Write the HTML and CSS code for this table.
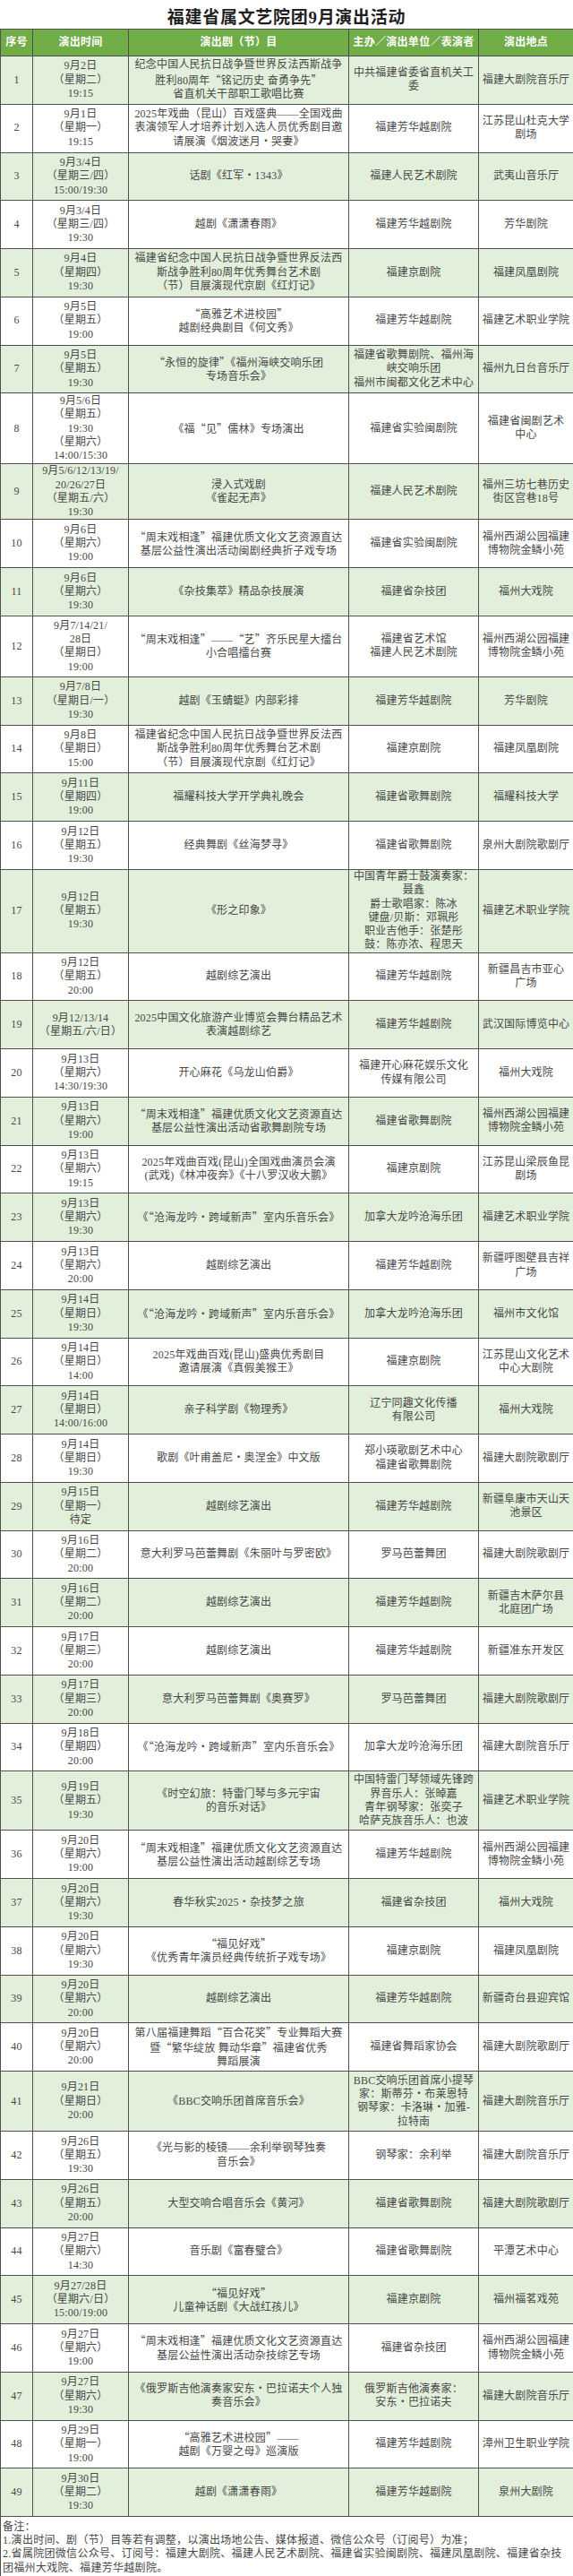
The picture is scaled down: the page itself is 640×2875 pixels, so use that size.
FILE: index.html
```html
<!DOCTYPE html>
<html lang="zh-CN">
<head>
<meta charset="utf-8">
<title>福建省属文艺院团9月演出活动</title>
<link rel="stylesheet" href="styles.css">
</head>
<body>
<div class="title">福建省属文艺院团9月演出活动</div>
<table class="schedule">
<colgroup>
<col class="c-no"><col class="c-time"><col class="c-prog"><col class="c-org"><col class="c-venue">
</colgroup>
<thead>
<tr><th>序号</th><th>演出时间</th><th>演出剧（节）目</th><th>主办／演出单位／表演者</th><th>演出地点</th></tr>
</thead>
<tbody>
<tr><td>1</td><td>9月2日<br>（星期二）<br>19:15</td><td>纪念中国人民抗日战争暨世界反法西斯战争<br>胜利80周年<span class="q">“</span>铭记历史 奋勇争先<span class="q">”</span><br>省直机关干部职工歌唱比赛</td><td>中共福建省委省直机关工<br>委</td><td>福建大剧院音乐厅</td></tr>
<tr><td>2</td><td>9月1日<br>（星期一）<br>19:15</td><td>2025年戏曲（昆山）百戏盛典——全国戏曲<br>表演领军人才培养计划入选人员优秀剧目邀<br>请展演《烟波迷月・哭妻》</td><td>福建芳华越剧院</td><td>江苏昆山杜克大学<br>剧场</td></tr>
<tr><td>3</td><td>9月3/4日<br>（星期三/四）<br>15:00/19:30</td><td>话剧《红军・1343》</td><td>福建人民艺术剧院</td><td>武夷山音乐厅</td></tr>
<tr><td>4</td><td>9月3/4日<br>（星期三/四）<br>19:30</td><td>越剧《潇潇春雨》</td><td>福建芳华越剧院</td><td>芳华剧院</td></tr>
<tr><td>5</td><td>9月4日<br>（星期四）<br>19:30</td><td>福建省纪念中国人民抗日战争暨世界反法西<br>斯战争胜利80周年优秀舞台艺术剧<br>（节）目展演现代京剧《红灯记》</td><td>福建京剧院</td><td>福建凤凰剧院</td></tr>
<tr><td>6</td><td>9月5日<br>（星期五）<br>19:00</td><td><span class="q">“</span>高雅艺术进校园<span class="q">”</span><br>越剧经典剧目《何文秀》</td><td>福建芳华越剧院</td><td>福建艺术职业学院</td></tr>
<tr><td>7</td><td>9月5日<br>（星期五）<br>19:30</td><td><span class="q">“</span>永恒的旋律<span class="q">”</span>《福州海峡交响乐团<br>专场音乐会》</td><td>福建省歌舞剧院、福州海<br>峡交响乐团<br>福州市闽都文化艺术中心</td><td>福州九日台音乐厅</td></tr>
<tr class="h79"><td>8</td><td>9月5/6日<br>（星期五）<br>19:30<br>（星期六）<br>14:00/15:30</td><td>《福<span class="q">“</span>见<span class="q">”</span>儒林》专场演出</td><td>福建省实验闽剧院</td><td>福建省闽剧艺术<br>中心</td></tr>
<tr class="h61"><td>9</td><td>9月5/6/12/13/19/<br>20/26/27日<br>（星期五/六）<br>19:30</td><td>浸入式戏剧<br>《雀起无声》</td><td>福建人民艺术剧院</td><td>福州三坊七巷历史<br>街区宫巷18号</td></tr>
<tr><td>10</td><td>9月6日<br>（星期六）<br>19:00</td><td><span class="q">“</span>周末戏相逢<span class="q">”</span>福建优质文化文艺资源直达<br>基层公益性演出活动闽剧经典折子戏专场</td><td>福建省实验闽剧院</td><td>福州西湖公园福建<br>博物院金鳞小苑</td></tr>
<tr><td>11</td><td>9月6日<br>（星期六）<br>19:30</td><td>《杂技集萃》精品杂技展演</td><td>福建省杂技团</td><td>福州大戏院</td></tr>
<tr class="h68"><td>12</td><td>9月7/14/21/<br>28日<br>（星期日）<br>19:00</td><td><span class="q">“</span>周末戏相逢<span class="q">”</span>——<span class="q">“</span>艺<span class="q">”</span>齐乐民星大擂台<br>小合唱擂台赛</td><td>福建省艺术馆<br>福建人民艺术剧院</td><td>福州西湖公园福建<br>博物院金鳞小苑</td></tr>
<tr><td>13</td><td>9月7/8日<br>（星期日/一）<br>19:30</td><td>越剧《玉蜻蜓》内部彩排</td><td>福建芳华越剧院</td><td>芳华剧院</td></tr>
<tr><td>14</td><td>9月8日<br>（星期日）<br>15:00</td><td>福建省纪念中国人民抗日战争暨世界反法西<br>斯战争胜利80周年优秀舞台艺术剧<br>（节）目展演现代京剧《红灯记》</td><td>福建京剧院</td><td>福建凤凰剧院</td></tr>
<tr><td>15</td><td>9月11日<br>（星期四）<br>19:00</td><td>福耀科技大学开学典礼晚会</td><td>福建省歌舞剧院</td><td>福耀科技大学</td></tr>
<tr><td>16</td><td>9月12日<br>（星期五）<br>19:30</td><td>经典舞剧《丝海梦寻》</td><td>福建省歌舞剧院</td><td>泉州大剧院歌剧厅</td></tr>
<tr class="h92"><td>17</td><td>9月12日<br>（星期五）<br>19:30</td><td>《形之印象》</td><td>中国青年爵士鼓演奏家：<br>聂鑫<br>爵士歌唱家：陈冰<br>键盘/贝斯：邓珮彤<br>职业吉他手：张楚彤<br>鼓：陈亦浓、程思天</td><td>福建艺术职业学院</td></tr>
<tr><td>18</td><td>9月12日<br>（星期五）<br>20:00</td><td>越剧综艺演出</td><td>福建芳华越剧院</td><td>新疆昌吉市亚心<br>广场</td></tr>
<tr><td>19</td><td>9月12/13/14<br>（星期五/六/日）</td><td>2025中国文化旅游产业博览会舞台精品艺术<br>表演越剧综艺</td><td>福建芳华越剧院</td><td>武汉国际博览中心</td></tr>
<tr><td>20</td><td>9月13日<br>（星期六）<br>14:30/19:30</td><td>开心麻花《乌龙山伯爵》</td><td>福建开心麻花娱乐文化<br>传媒有限公司</td><td>福州大戏院</td></tr>
<tr><td>21</td><td>9月13日<br>（星期六）<br>19:00</td><td><span class="q">“</span>周末戏相逢<span class="q">”</span>福建优质文化文艺资源直达<br>基层公益性演出活动省歌舞剧院专场</td><td>福建省歌舞剧院</td><td>福州西湖公园福建<br>博物院金鳞小苑</td></tr>
<tr><td>22</td><td>9月13日<br>（星期六）<br>19:15</td><td>2025年戏曲百戏(昆山)全国戏曲演员会演<br>(武戏)《林冲夜奔》《十八罗汉收大鹏》</td><td>福建京剧院</td><td>江苏昆山梁辰鱼昆<br>剧场</td></tr>
<tr><td>23</td><td>9月13日<br>（星期六）<br>19:30</td><td>《<span class="q">“</span>沧海龙吟・跨域新声<span class="q">”</span>室内乐音乐会》</td><td>加拿大龙吟沧海乐团</td><td>福建艺术职业学院</td></tr>
<tr><td>24</td><td>9月13日<br>（星期六）<br>20:00</td><td>越剧综艺演出</td><td>福建芳华越剧院</td><td>新疆呼图壁县吉祥<br>广场</td></tr>
<tr><td>25</td><td>9月14日<br>（星期日）<br>19:30</td><td>《<span class="q">“</span>沧海龙吟・跨域新声<span class="q">”</span>室内乐音乐会》</td><td>加拿大龙吟沧海乐团</td><td>福州市文化馆</td></tr>
<tr><td>26</td><td>9月14日<br>（星期日）<br>14:00</td><td>2025年戏曲百戏(昆山)盛典优秀剧目<br>邀请展演《真假美猴王》</td><td>福建京剧院</td><td>江苏昆山文化艺术<br>中心大剧院</td></tr>
<tr><td>27</td><td>9月14日<br>（星期日）<br>14:00/16:00</td><td>亲子科学剧《物理秀》</td><td>辽宁同趣文化传播<br>有限公司</td><td>福州大戏院</td></tr>
<tr><td>28</td><td>9月14日<br>（星期日）<br>19:30</td><td>歌剧《叶甫盖尼・奥涅金》中文版</td><td>郑小瑛歌剧艺术中心<br>福建省歌舞剧院</td><td>福建大剧院歌剧厅</td></tr>
<tr><td>29</td><td>9月15日<br>（星期一）<br>待定</td><td>越剧综艺演出</td><td>福建芳华越剧院</td><td>新疆阜康市天山天<br>池景区</td></tr>
<tr><td>30</td><td>9月16日<br>（星期二）<br>20:00</td><td>意大利罗马芭蕾舞剧《朱丽叶与罗密欧》</td><td>罗马芭蕾舞团</td><td>福建大剧院歌剧厅</td></tr>
<tr><td>31</td><td>9月16日<br>（星期二）<br>20:00</td><td>越剧综艺演出</td><td>福建芳华越剧院</td><td>新疆吉木萨尔县<br>北庭团广场</td></tr>
<tr><td>32</td><td>9月17日<br>（星期三）<br>20:00</td><td>越剧综艺演出</td><td>福建芳华越剧院</td><td>新疆准东开发区</td></tr>
<tr><td>33</td><td>9月17日<br>（星期三）<br>20:00</td><td>意大利罗马芭蕾舞剧《奥赛罗》</td><td>罗马芭蕾舞团</td><td>福建大剧院歌剧厅</td></tr>
<tr><td>34</td><td>9月18日<br>（星期四）<br>20:00</td><td>《<span class="q">“</span>沧海龙吟・跨域新声<span class="q">”</span>室内乐音乐会》</td><td>加拿大龙吟沧海乐团</td><td>福建大剧院音乐厅</td></tr>
<tr class="h66"><td>35</td><td>9月19日<br>（星期五）<br>19:30</td><td>《时空幻旅：特雷门琴与多元宇宙<br>的音乐对话》</td><td>中国特雷门琴领域先锋跨<br>界音乐人：张晫嘉<br>青年钢琴家：张奕子<br>哈萨克族音乐人：也波</td><td>福建艺术职业学院</td></tr>
<tr><td>36</td><td>9月20日<br>（星期六）<br>19:00</td><td><span class="q">“</span>周末戏相逢<span class="q">”</span>福建优质文化文艺资源直达<br>基层公益性演出活动越剧综艺专场</td><td>福建芳华越剧院</td><td>福州西湖公园福建<br>博物院金鳞小苑</td></tr>
<tr><td>37</td><td>9月20日<br>（星期六）<br>19:30</td><td>春华秋实2025・杂技梦之旅</td><td>福建省杂技团</td><td>福州大戏院</td></tr>
<tr><td>38</td><td>9月20日<br>（星期六）<br>19:30</td><td><span class="q">“</span>福见好戏<span class="q">”</span><br>《优秀青年演员经典传统折子戏专场》</td><td>福建京剧院</td><td>福建凤凰剧院</td></tr>
<tr><td>39</td><td>9月20日<br>（星期六）<br>20:00</td><td>越剧综艺演出</td><td>福建芳华越剧院</td><td>新疆奇台县迎宾馆</td></tr>
<tr><td>40</td><td>9月20日<br>（星期六）<br>20:00</td><td>第八届福建舞蹈<span class="q">“</span>百合花奖<span class="q">”</span>专业舞蹈大赛<br>暨<span class="q">“</span>繁华绽放 舞动华章<span class="q">”</span>福建省优秀<br>舞蹈展演</td><td>福建省舞蹈家协会</td><td>福建大剧院歌剧厅</td></tr>
<tr class="h67"><td>41</td><td>9月21日<br>（星期日）<br>20:00</td><td>《BBC交响乐团首席音乐会》</td><td>BBC交响乐团首席小提琴<br>家：斯蒂芬・布莱恩特<br>钢琴家：卡洛琳・加雅-<br>拉特南</td><td>福建大剧院音乐厅</td></tr>
<tr><td>42</td><td>9月26日<br>（星期五）<br>19:30</td><td>《光与影的棱镜——余利举钢琴独奏<br>音乐会》</td><td>钢琴家：余利举</td><td>福建大剧院音乐厅</td></tr>
<tr><td>43</td><td>9月26日<br>（星期五）<br>20:00</td><td>大型交响合唱音乐会《黄河》</td><td>福建省歌舞剧院</td><td>福建大剧院歌剧厅</td></tr>
<tr><td>44</td><td>9月27日<br>（星期六）<br>14:30</td><td>音乐剧《富春璧合》</td><td>福建省歌舞剧院</td><td>平潭艺术中心</td></tr>
<tr><td>45</td><td>9月27/28日<br>（星期六/日）<br>15:00/19:00</td><td><span class="q">“</span>福见好戏<span class="q">”</span><br>儿童神话剧《大战红孩儿》</td><td>福建京剧院</td><td>福州福茗戏苑</td></tr>
<tr><td>46</td><td>9月27日<br>（星期六）<br>19:00</td><td><span class="q">“</span>周末戏相逢<span class="q">”</span>福建优质文化文艺资源直达<br>基层公益性演出活动杂技综艺专场</td><td>福建省杂技团</td><td>福州西湖公园福建<br>博物院金鳞小苑</td></tr>
<tr><td>47</td><td>9月27日<br>（星期六）<br>19:30</td><td>《俄罗斯吉他演奏家安东・巴拉诺夫个人独<br>奏音乐会》</td><td>俄罗斯吉他演奏家：<br>安东・巴拉诺夫</td><td>福建大剧院音乐厅</td></tr>
<tr><td>48</td><td>9月29日<br>（星期一）<br>19:00</td><td><span class="q">“</span>高雅艺术进校园<span class="q">”</span>——<br>越剧《万婴之母》巡演版</td><td>福建芳华越剧院</td><td>漳州卫生职业学院</td></tr>
<tr><td>49</td><td>9月30日<br>（星期二）<br>19:30</td><td>越剧《潇潇春雨》</td><td>福建芳华越剧院</td><td>泉州大剧院</td></tr>
<tr class="notes"><td colspan="5">备注：<br>1.演出时间、剧（节）目等若有调整，以演出场地公告、媒体报道、微信公众号（订阅号）为准；<br>2.省属院团微信公众号、订阅号：福建大剧院、福建人民艺术剧院、福建省实验闽剧院、福建凤凰剧院、福建省杂技<br>团福州大戏院、福建芳华越剧院。</td></tr>
</tbody>
</table>
</body>
</html>
```

FILE: styles.css
```css
html, body {
  margin: 0;
  padding: 0;
  background: #ffffff;
}

body {
  width: 640px;
  font-family: "Liberation Serif", "Noto Sans CJK SC", serif;
  color: #484848;
}

.title {
  height: 32px;
  display: flex;
  align-items: center;
  justify-content: center;
  padding-top: 2px;
  box-sizing: border-box;
  font-size: 19px;
  font-weight: 700;
  letter-spacing: 0.7px;
  color: #1f1f1f;
}

.schedule {
  width: 640px;
  border-collapse: collapse;
  table-layout: fixed;
  font-size: 12px;
  line-height: 15.3px;
  letter-spacing: 0.2px;
}

.c-no { width: 36px; }
.c-time { width: 107px; }
.c-prog { width: 246px; }
.c-org { width: 145px; }
.c-venue { width: 106px; }

.schedule th,
.schedule td {
  border: 1px solid #505050;
  padding: 0 1px;
  text-align: center;
  vertical-align: middle;
  white-space: nowrap;
  overflow: hidden;
}

.schedule thead tr {
  height: 30px;
  background: #70ad47;
}

.schedule th {
  color: #ffffff;
  font-weight: 700;
  font-size: 12px;
  letter-spacing: 0.3px;
}

.schedule tbody tr {
  height: 53.75px;
}

.schedule tbody tr:nth-child(odd) {
  background: #e2efda;
}

.schedule tbody tr.h61 { height: 61px; }
.schedule tbody tr.h66 { height: 66px; }
.schedule tbody tr.h67 { height: 67px; }
.schedule tbody tr.h68 { height: 68px; }
.schedule tbody tr.h79 { height: 79px; }
.schedule tbody tr.h92 { height: 92px; }

.schedule tbody tr.notes {
  height: 69px;
  background: #ffffff;
}

.schedule tr.notes td {
  text-align: left;
  padding: 0 2px;
  letter-spacing: 0.3px;
}

.q {
  font-family: "Noto Sans CJK SC", sans-serif;
  font-feature-settings: "fwid" 1;
}
```
